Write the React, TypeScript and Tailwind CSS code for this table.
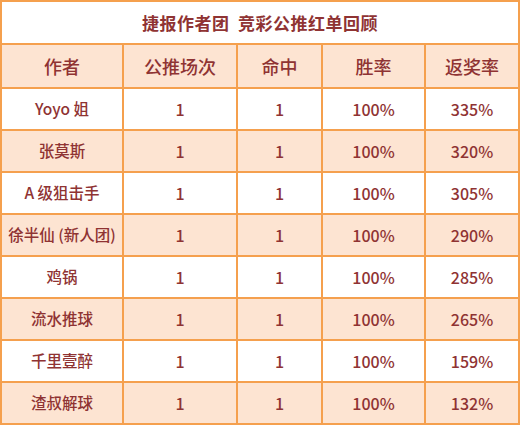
import React from 'react'

type Row = { name: string; games: string; hits: string; rate: string; ret: string }

const ROWS: Row[] = [
  { name: 'Yoyo 姐', games: '1', hits: '1', rate: '100%', ret: '335%' },
  { name: '张莫斯', games: '1', hits: '1', rate: '100%', ret: '320%' },
  { name: 'A 级狙击手', games: '1', hits: '1', rate: '100%', ret: '305%' },
  { name: '徐半仙 (新人团)', games: '1', hits: '1', rate: '100%', ret: '290%' },
  { name: '鸡锅', games: '1', hits: '1', rate: '100%', ret: '285%' },
  { name: '流水推球', games: '1', hits: '1', rate: '100%', ret: '265%' },
  { name: '千里壹醉', games: '1', hits: '1', rate: '100%', ret: '159%' },
  { name: '渣叔解球', games: '1', hits: '1', rate: '100%', ret: '132%' },
]

const HEAD = ['作者', '公推场次', '命中', '胜率', '返奖率']

const cell = 'border-2 border-[#f5a04e] text-center align-middle'

export default function App() {
  return (
    <div
      className="h-[425px] w-[520px] bg-white text-[#8f3333]"
      style={{ fontFamily: '"Noto Sans CJK SC", "Noto Sans", sans-serif' }}
    >
      <table className="w-[520px] table-fixed border-collapse">
        <colgroup>
          <col className="w-[122px]" />
          <col className="w-[114px]" />
          <col className="w-[85px]" />
          <col className="w-[103px]" />
          <col />
        </colgroup>
        <tbody>
          <tr className="h-[43px]">
            <td colSpan={5} className={`${cell} text-[17px] font-bold tracking-[0.5px]`}>
              捷报作者团&nbsp;&nbsp;竞彩公推红单回顾
            </td>
          </tr>
          <tr className="h-[44px] bg-[#fde4d2]">
            {HEAD.map((h) => (
              <td key={h} className={`${cell} text-[18px] font-medium`}>
                {h}
              </td>
            ))}
          </tr>
          {ROWS.map((r, i) => (
            <tr key={r.name} className={i % 2 === 0 ? 'h-[42px] bg-white' : 'h-[42px] bg-[#fde4d2]'}>
              <td className={`${cell} text-[15.5px] font-medium whitespace-nowrap`}>{r.name}</td>
              <td className={`${cell} text-[16px] font-medium`}>{r.games}</td>
              <td className={`${cell} text-[16px] font-medium`}>{r.hits}</td>
              <td className={`${cell} text-[16px] font-medium`}>{r.rate}</td>
              <td className={`${cell} text-[16px] font-medium`}>{r.ret}</td>
            </tr>
          ))}
        </tbody>
      </table>
    </div>
  )
}
